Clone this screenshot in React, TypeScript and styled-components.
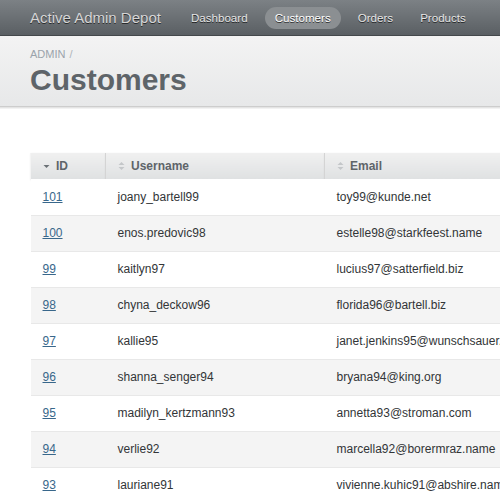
import React from "react";
import styled, { createGlobalStyle } from "styled-components";

const Global = createGlobalStyle`
  html, body { margin: 0; padding: 0; overflow: hidden; background: #fff; }
  body { font-family: "Liberation Sans", Arial, sans-serif; color: #323537; }
`;

const Page = styled.div`
  width: 500px;
  height: 500px;
  overflow: hidden;
  display: flex;
  flex-direction: column;
`;

const Header = styled.header`
  height: 35px;
  flex: none;
  display: flex;
  align-items: center;
  padding-left: 30px;
  background: linear-gradient(to bottom, #7c8185 0%, #5a5f63 100%);
  border-bottom: 1px solid #44484b;
`;

const SiteTitle = styled.h1`
  margin: 0 20px 0 0;
  font-size: 15px;
  font-weight: normal;
  color: #d6d6d6;
  text-shadow: 0 1px 0 rgba(0, 0, 0, 0.6);
  white-space: nowrap;
`;

const Nav = styled.nav`
  display: flex;
  align-items: center;
  gap: 7px;
`;

const NavItem = styled.a<{ $active?: boolean }>`
  display: block;
  padding: 4px 10px 5px;
  border-radius: 12px;
  font-size: 11.6px;
  white-space: nowrap;
  color: ${(p) => (p.$active ? "#ffffff" : "#e6e6e6")};
  background: ${(p) => (p.$active ? "#8b8f92" : "transparent")};
  text-shadow: 0 1px 0 rgba(0, 0, 0, 0.7);
`;

const TitleBar = styled.div`
  flex: none;
  height: 71px;
  box-sizing: border-box;
  padding: 12px 30px 0;
  background: linear-gradient(to bottom, #f3f3f3 0%, #e7e8e9 100%);
  border-bottom: 1px solid #cdcdcd;
  box-shadow: 0 1px 0 #e4e4e4, 0 2px 0 #f2f2f2;
`;

const Breadcrumb = styled.div`
  font-size: 11px;
  color: #9ba3ab;
  span { margin-left: 4px; color: #aeb4ba; }
`;

const PageTitle = styled.h2`
  margin: 3px 0 0;
  font-size: 30px;
  font-weight: bold;
  color: #5e6469;
  line-height: 34px;
`;

const Main = styled.div`
  padding: 46px 0 0 30px;
`;

const Table = styled.table`
  width: 720px;
  border-collapse: collapse;
  border-spacing: 0;
  font-size: 12px;
`;

const Th = styled.th<{ $w?: number }>`
  width: ${(p) => (p.$w ? `${p.$w}px` : "auto")};
  height: 26px;
  box-sizing: border-box;
  padding: 0 12px;
  text-align: left;
  font-weight: bold;
  color: #5e6469;
  background: linear-gradient(to bottom, #f0f0f0 0%, #dfe1e2 100%);
  border-right: 1px solid #d4d4d4;
  border-left: 1px solid #f4f4f4;
  box-shadow: 0 1px 2px rgba(0, 0, 0, 0.18);
  white-space: nowrap;
`;

const HeadInner = styled.span`
  display: inline-flex;
  align-items: center;
  gap: 6px;
`;

const Tr = styled.tr<{ $odd: boolean }>`
  background: ${(p) => (p.$odd ? "#f4f4f4" : "#ffffff")};
  border-bottom: 1px solid #e8e8e8;
`;

const Td = styled.td`
  height: 36px;
  box-sizing: border-box;
  padding: 0 12px;
  white-space: nowrap;
  color: #323537;
  vertical-align: middle;
`;

const IdLink = styled.a`
  color: #38678b;
  text-decoration: underline;
`;

const SortDown = () => (
  <svg width="7" height="10" viewBox="0 0 7 10">
    <path d="M0.5 4 L6.5 4 L3.5 7 Z" fill="#6b7176" />
  </svg>
);

const SortBoth = () => (
  <svg width="7" height="10" viewBox="0 0 7 10">
    <path d="M0.5 4 L6.5 4 L3.5 1 Z" fill="#c4c7c9" />
    <path d="M0.5 6 L6.5 6 L3.5 9 Z" fill="#c4c7c9" />
  </svg>
);

const rows = [
  ["101", "joany_bartell99", "toy99@kunde.net"],
  ["100", "enos.predovic98", "estelle98@starkfeest.name"],
  ["99", "kaitlyn97", "lucius97@satterfield.biz"],
  ["98", "chyna_deckow96", "florida96@bartell.biz"],
  ["97", "kallie95", "janet.jenkins95@wunschsauer.name"],
  ["96", "shanna_senger94", "bryana94@king.org"],
  ["95", "madilyn_kertzmann93", "annetta93@stroman.com"],
  ["94", "verlie92", "marcella92@borermraz.name"],
  ["93", "lauriane91", "vivienne.kuhic91@abshire.name"],
];

export default function App() {
  return (
    <Page>
      <Global />
      <Header>
        <SiteTitle>Active Admin Depot</SiteTitle>
        <Nav>
          <NavItem>Dashboard</NavItem>
          <NavItem $active>Customers</NavItem>
          <NavItem>Orders</NavItem>
          <NavItem>Products</NavItem>
        </Nav>
      </Header>
      <TitleBar>
        <Breadcrumb>
          ADMIN<span>/</span>
        </Breadcrumb>
        <PageTitle>Customers</PageTitle>
      </TitleBar>
      <Main>
        <Table>
          <thead>
            <tr>
              <Th $w={75}>
                <HeadInner>
                  <SortDown />
                  ID
                </HeadInner>
              </Th>
              <Th $w={219}>
                <HeadInner>
                  <SortBoth />
                  Username
                </HeadInner>
              </Th>
              <Th>
                <HeadInner>
                  <SortBoth />
                  Email
                </HeadInner>
              </Th>
            </tr>
          </thead>
          <tbody>
            {rows.map((r, i) => (
              <Tr key={r[0]} $odd={i % 2 === 1}>
                <Td>
                  <IdLink>{r[0]}</IdLink>
                </Td>
                <Td>{r[1]}</Td>
                <Td>{r[2]}</Td>
              </Tr>
            ))}
          </tbody>
        </Table>
      </Main>
    </Page>
  );
}
